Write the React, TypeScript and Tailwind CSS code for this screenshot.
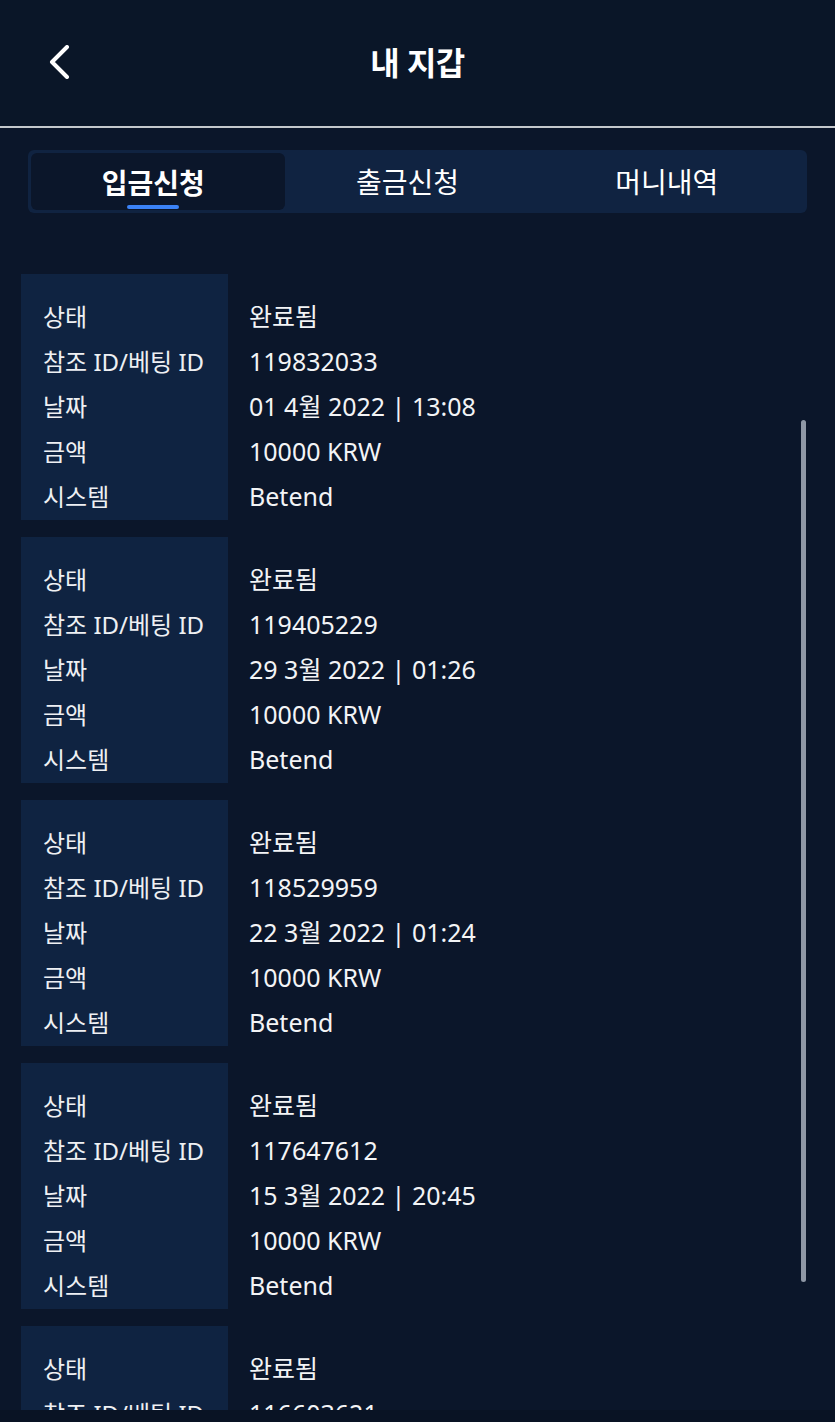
const records = [
  { id: "119832033", date: "01 4월 2022 | 13:08" },
  { id: "119405229", date: "29 3월 2022 | 01:26" },
  { id: "118529959", date: "22 3월 2022 | 01:24" },
  { id: "117647612", date: "15 3월 2022 | 20:45" },
  { id: "116603621", date: "08 3월 2022 | 18:12" },
];

const labels = ["상태", "참조 ID/베팅 ID", "날짜", "금액", "시스템"];

const tabs = ["입금신청", "출금신청", "머니내역"];

const App = () => {
  return (
    <div
      className="h-[1422px] w-full flex flex-col bg-[#0b162a] text-white overflow-hidden"
      style={{ fontFamily: '"Noto Sans", "Noto Sans CJK KR", sans-serif' }}
    >
      <header className="h-[126px] shrink-0 flex items-center justify-center relative bg-[#0a1628]">
        <button className="absolute left-[47px] top-[45px] text-white">
          <svg width="24" height="34" viewBox="0 0 24 34" fill="none">
            <polyline
              points="20,2 5,17 20,32"
              stroke="currentColor"
              strokeWidth="4"
              strokeLinecap="round"
              strokeLinejoin="round"
            />
          </svg>
        </button>
        <h1 className="text-[32px] font-bold tracking-[-0.5px]">내 지갑</h1>
      </header>
      <div className="h-[2px] shrink-0 bg-[#c4c8cc]" />

      <div className="px-[28px] pt-[22px] shrink-0">
        <div className="h-[63px] rounded-md bg-[#102341] p-[3px] flex">
          {tabs.map((tab, i) => (
            <div
              key={tab}
              className={
                i === 0
                  ? "flex-1 rounded-md bg-[#0b162a] flex flex-col items-center justify-center relative pr-[10px]"
                  : "flex-1 flex items-center justify-center pr-[15px]"
              }
            >
              <span
                className={
                  i === 0
                    ? "text-[28px] font-bold leading-none mt-[2px]"
                    : "text-[28px] font-normal leading-none"
                }
              >
                {tab}
              </span>
              {i === 0 && (
                <span className="absolute bottom-[1px] h-[4px] w-[52px] rounded-full bg-[#3b82f6]" />
              )}
            </div>
          ))}
        </div>
      </div>

      <div className="flex-1 relative overflow-hidden pt-[61px] px-[21px]">
        <div className="flex flex-col gap-[17px]">
          {records.map((r) => {
            const values = ["완료됨", r.id, r.date, "10000 KRW", "Betend"];
            return (
              <div key={r.id} className="flex h-[246px] shrink-0">
                <div className="w-[207px] bg-[#0f2341] pt-[20px] pl-[22px]">
                  {labels.map((l) => (
                    <div key={l} className="h-[45px] flex items-center text-[24px] text-[#eef0f3] whitespace-nowrap">
                      {l}
                    </div>
                  ))}
                </div>
                <div className="flex-1 pt-[20px] pl-[21px]">
                  {values.map((v, i) => (
                    <div key={i} className="h-[45px] flex items-center text-[25px] text-[#f3f4f6] whitespace-nowrap">
                      {v}
                    </div>
                  ))}
                </div>
              </div>
            );
          })}
        </div>
        <div className="absolute right-[29px] top-[207px] h-[862px] w-[5px] rounded-full bg-[#8f98a6]" />
      </div>
      <div className="h-[12px] shrink-0 bg-[#091324]" />
    </div>
  );
};

export default App;
